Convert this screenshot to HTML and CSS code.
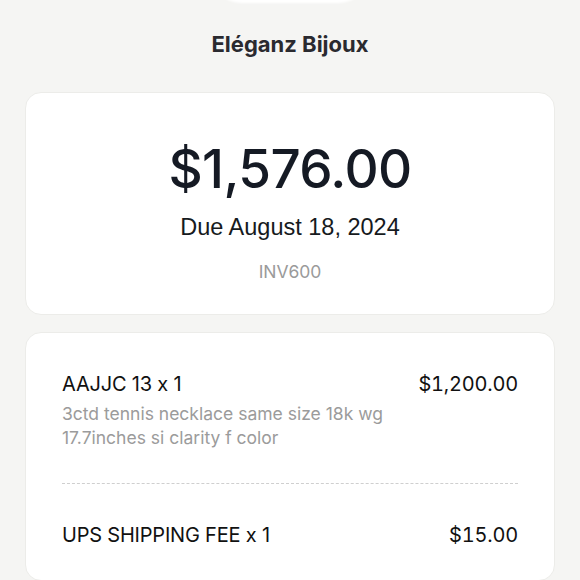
FILE: index.html
```html
<!DOCTYPE html>
<html lang="en">
<head>
  <meta charset="UTF-8">
  <title>Eléganz Bijoux - Invoice INV600</title>
  <link rel="stylesheet" href="styles.css">
</head>
<body>
  <div class="page">
    <div class="logo"></div>
    <h1 class="shop">Eléganz Bijoux</h1>

    <div class="card summary">
      <div class="amount">$1,576.00</div>
      <div class="due">Due August 18, 2024</div>
      <div class="invno">INV600</div>
    </div>

    <div class="card items">
      <div class="item">
        <div class="item-row">
          <span class="item-name">AAJJC 13 x 1</span>
          <span class="item-price">$1,200.00</span>
        </div>
        <p class="item-desc">3ctd tennis necklace same size 18k wg<br>17.7inches si clarity f color</p>
      </div>
      <div class="item">
        <div class="item-row">
          <span class="item-name">UPS SHIPPING FEE x 1</span>
          <span class="item-price">$15.00</span>
        </div>
      </div>
    </div>
  </div>
</body>
</html>
```

FILE: styles.css
```css
html, body { margin: 0; padding: 0; }
body { background: #f5f5f3; font-family: Inter, "Noto Sans", sans-serif; color: #15181e; }
.page { position: relative; padding: 0 25px 40px; }
.logo { position: absolute; top: -60px; left: 210px; width: 160px; height: 63px; background: #fff; border-radius: 40px; filter: blur(1px); }
.shop { margin: 0; padding-top: 30px; text-align: center; font-weight: 700; font-size: 22px; color: #2a2a2f; line-height: 28px; }
.card { background: #fff; border-radius: 16px; border: 1px solid #ecece9; }
.summary { margin-top: 34px; height: 223px; display: flex; flex-direction: column; align-items: center; box-sizing: border-box; padding-top: 46px; }
.amount { font-size: 53px; font-weight: 500; letter-spacing: -0.6px; line-height: 60px; color: #151a24; }
.due { margin-top: 14px; font-family: "Liberation Sans", Arial, sans-serif; font-size: 23.5px; line-height: 28px; color: #161a20; }
.invno { margin-top: 20px; font-size: 17.5px; line-height: 22px; color: #9a9a9a; }
.items { margin-top: 17px; padding: 0 36px; }
.item { padding: 39px 0 33px; }
.item + .item { padding-top: 39px; border-top: 1.5px dashed #cfcfcf; }
.item-row { display: flex; justify-content: space-between; align-items: baseline; font-size: 20px; line-height: 24px; letter-spacing: -0.2px; color: #111; }
.item-price { font-variant-numeric: tabular-nums; }
.item-desc { margin: 6px 0 0; font-size: 17.5px; line-height: 24px; color: #9b9b9b; }
```
